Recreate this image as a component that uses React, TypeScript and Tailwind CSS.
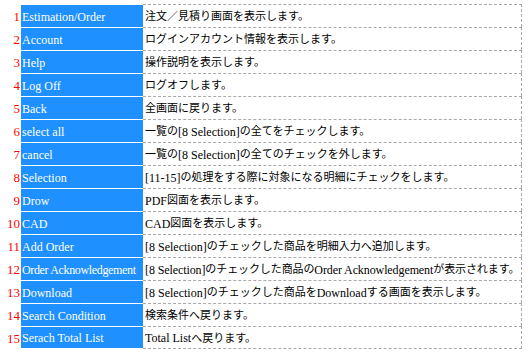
import React from 'react';

const rows: [string, string][] = [
    ['Estimation/Order', '注文／見積り画面を表示します。'],
    ['Account', 'ログインアカウント情報を表示します。'],
    ['Help', '操作説明を表示します。'],
    ['Log Off', 'ログオフします。'],
    ['Back', '全画面に戻ります。'],
    ['select all', '一覧の[8 Selection]の全てをチェックします。'],
    ['cancel', '一覧の[8 Selection]の全てのチェックを外します。'],
    ['Selection', '[11-15]の処理をする際に対象になる明細にチェックをします。'],
    ['Drow', 'PDF図面を表示します。'],
    ['CAD', 'CAD図面を表示します。'],
    ['Add Order', '[8 Selection]のチェックした商品を明細入力へ追加します。'],
    ['Order Acknowledgement', '[8 Selection]のチェックした商品のOrder Acknowledgementが表示されます。'],
    ['Download', '[8 Selection]のチェックした商品をDownloadする画面を表示します。'],
    ['Search Condition', '検索条件へ戻ります。'],
    ['Serach Total List', 'Total Listへ戻ります。'],
];

// latin runs are a bit larger than the japanese text in the original page
const Mixed = ({ text }: { text: string }) => (
    <>
        {text.split(/([A-Za-z0-9\[\]\- ]+)/).map((part, i) =>
            /[A-Za-z0-9]/.test(part) ? (
                <span key={i} className="text-[12px]">{part}</span>
            ) : (
                <span key={i}>{part}</span>
            )
        )}
    </>
);

const HelpRow = ({ no, label, text, last }: { no: number; label: string; text: string; last: boolean }) => (
    <div className="flex h-[23px]">
        <div className="w-[21px] shrink-0 pr-[1px] pt-[1px] flex items-center justify-end text-[#ff0000] text-[13px]">{no}</div>
        <div
            className={`w-[122px] shrink-0 pl-[1px] pt-[1px] flex items-center bg-[#1e90ff] text-white whitespace-nowrap overflow-hidden border-t border-white ${last ? 'border-b' : ''} ${label.length > 18 ? 'tracking-[-0.35px]' : ''}`}
        >
            {label}
        </div>
        <div className={`flex-1 min-w-0 pl-[2px] pt-[1px] flex items-center whitespace-nowrap text-black text-[11px] border-t border-r border-dashed border-[#a9a9a9] ${last ? 'border-b' : ''} ${text.length > 50 ? 'tracking-[-0.1px]' : ''}`}>
            <Mixed text={text} />
        </div>
    </div>
);

export default function App() {
    return (
        <div
            className="w-[528px] h-[356px] bg-white pt-[4px] text-[12px] leading-none"
            style={{ fontFamily: '"Liberation Serif", "Noto Sans CJK JP", serif' }}
        >
            <div className="w-[522px]">
                {rows.map(([label, text], idx) => (
                    <HelpRow key={idx} no={idx + 1} label={label} text={text} last={idx === rows.length - 1} />
                ))}
            </div>
        </div>
    );
}
